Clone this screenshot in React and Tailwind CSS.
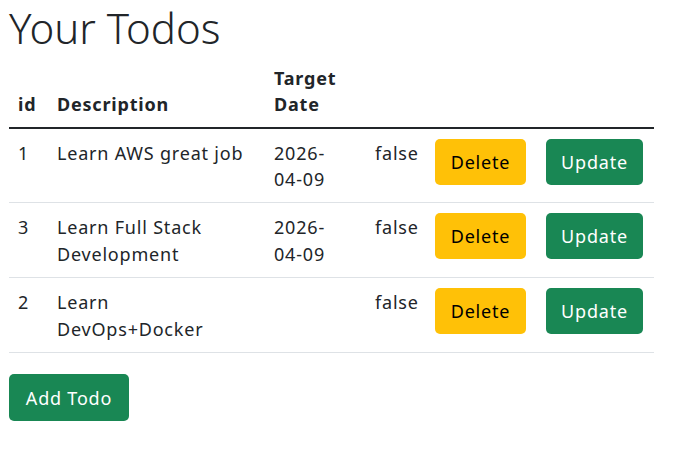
const todos = [
  { id: 1, description: ['Learn AWS great job'], date: ['2026-', '04-09'], done: 'false' },
  { id: 3, description: ['Learn Full Stack', 'Development'], date: ['2026-', '04-09'], done: 'false' },
  { id: 2, description: ['Learn', 'DevOps+Docker'], date: [], done: 'false' },
];

const Lines = ({ lines }) =>
  lines.map((l, i) => (
    <span key={i} className="block">
      {l}
    </span>
  ));

export default function App() {
  return (
    <div
      className="w-[678px] h-[472px] bg-white text-[#212529] text-[18px] leading-[26.4px] tracking-[0.8px]"
      style={{ fontFamily: '"Noto Sans", "Open Sans", sans-serif' }}
    >
      <div className="pl-[9px] w-[654px] pt-px">
        <h1 className="text-[42px] leading-[54px] font-light mb-[10px] tracking-normal">Your Todos</h1>
        <table className="w-[645px] table-fixed border-collapse">
          <colgroup>
            <col className="w-[39px]" />
            <col className="w-[217px]" />
            <col className="w-[101px]" />
            <col className="w-[60px]" />
            <col className="w-[111px]" />
            <col className="w-[117px]" />
          </colgroup>
          <thead>
            <tr className="border-b-2 border-[#212529]">
              <th className="text-left align-bottom font-bold px-[9px] pt-[9px] pb-[9px]">id</th>
              <th className="text-left align-bottom font-bold px-[9px] pb-[9px]">Description</th>
              <th className="text-left align-bottom font-bold px-[9px] pb-[9px]">
                <span className="block">Target</span>
                <span className="block">Date</span>
              </th>
              <th className="px-[9px]"></th>
              <th className="px-[9px]"></th>
              <th className="px-[9px]"></th>
            </tr>
          </thead>
          <tbody>
            {todos.map((t) => (
              <tr key={t.id} className="border-b border-[#dee2e6] h-[75px]">
                <td className="align-top px-[9px] pt-[11px]">{t.id}</td>
                <td className="align-top px-[9px] pt-[11px]">
                  <Lines lines={t.description} />
                </td>
                <td className="align-top px-[9px] pt-[11px]">
                  <Lines lines={t.date} />
                </td>
                <td className="align-top px-[9px] pt-[11px]">{t.done}</td>
                <td className="align-top px-[9px] pt-[10px]">
                  <button className="w-[91px] h-[46px] rounded-[5px] bg-[#ffc107] text-black flex items-center justify-center">
                    Delete
                  </button>
                </td>
                <td className="align-top px-[9px] pt-[10px]">
                  <button className="w-[97px] h-[46px] rounded-[5px] bg-[#198754] text-white flex items-center justify-center">
                    Update
                  </button>
                </td>
              </tr>
            ))}
          </tbody>
        </table>
        <button className="mt-[21px] w-[120px] h-[47px] rounded-[5px] bg-[#198754] text-white flex items-center justify-center">
          Add Todo
        </button>
      </div>
    </div>
  );
}
